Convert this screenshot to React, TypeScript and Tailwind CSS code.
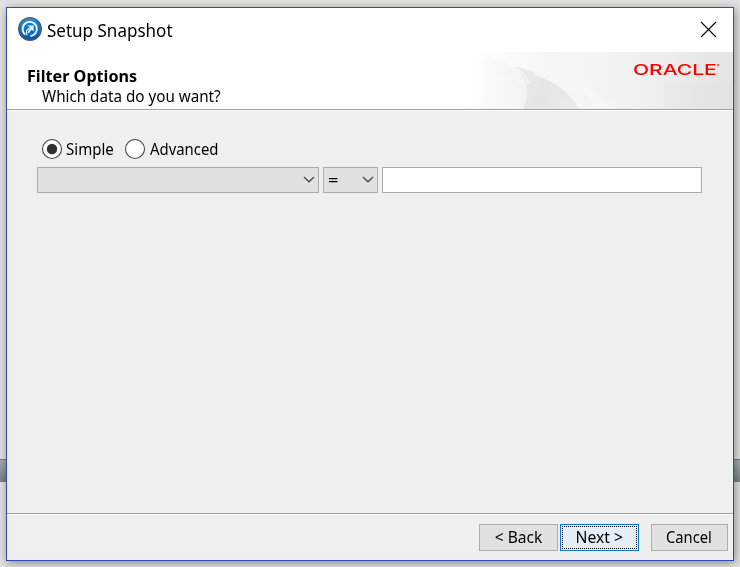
import React from "react";

function AppIcon() {
  return (
    <svg width="24" height="24" viewBox="0 0 24 24" className="mb-[2px] shrink-0">
      <defs>
        <linearGradient id="disc" x1="0" y1="0" x2="0" y2="1">
          <stop offset="0" stopColor="#1a95e6" />
          <stop offset="1" stopColor="#0551ae" />
        </linearGradient>
      </defs>
      <circle cx="12" cy="12" r="11.3" fill="url(#disc)" stroke="#4d5963" strokeWidth="1.3" />
      <path d="M7.2 17.4A7.1 7.1 0 1 1 12.4 19" fill="none" stroke="#e8f4fd" strokeWidth="1.9" />
      <path d="M9 18.2C7.6 15 8.6 12.2 11.6 11.4" fill="none" stroke="#e8f4fd" strokeWidth="1.2" />
      <path d="M9.8 8.6H15.6V14.4L13.6 12.6L10.6 16.6L9.4 15.4L12 11.2Z" fill="#e8f4fd" />
    </svg>
  );
}

function Chevron() {
  return (
    <svg width="12" height="7" viewBox="0 0 12 7" className="mb-px shrink-0">
      <path d="M1 1l5 4.8L11 1" fill="none" stroke="#444" strokeWidth="1.2" />
    </svg>
  );
}

function BannerArt() {
  return (
    <svg width="273" height="57" viewBox="0 0 273 57" className="absolute top-0 right-0">
      <defs>
        <linearGradient id="base" x1="0" y1="0" x2="1" y2="0">
          <stop offset="0" stopColor="#fff" />
          <stop offset="0.3" stopColor="#f7f7f7" />
          <stop offset="0.65" stopColor="#f1f1f1" />
          <stop offset="1" stopColor="#e4e4e4" />
        </linearGradient>
        <linearGradient id="petal" x1="0" y1="0" x2="1" y2="0">
          <stop offset="0" stopColor="#fbfbfb" />
          <stop offset="1" stopColor="#f3f3f3" />
        </linearGradient>
        <linearGradient id="shade" x1="0" y1="0" x2="1" y2="0.4">
          <stop offset="0" stopColor="#ececec" />
          <stop offset="0.6" stopColor="#e5e5e5" />
          <stop offset="1" stopColor="#ebebeb" />
        </linearGradient>
        <linearGradient id="ray" x1="0" y1="0" x2="1" y2="0.5">
          <stop offset="0" stopColor="#fafafa" />
          <stop offset="1" stopColor="#fafafa" stopOpacity="0" />
        </linearGradient>
        <filter id="soft">
          <feGaussianBlur stdDeviation="0.7" />
        </filter>
      </defs>
      <path d="M0 0h273v57H0z" fill="url(#base)" />
      <g filter="url(#soft)">
        <path d="M22 3C42 5 64 18 69 34Q69 47 63 60H20L28 28Q24 16 22 3Z" fill="url(#petal)" />
        <path d="M54 14C87 22 112 39 121 60H62Q75 33 54 14Z" fill="url(#shade)" />
        <path d="M28 27Q48 24 68 32" fill="none" stroke="#fff" strokeOpacity="0.6" strokeWidth="1" />
        <path d="M22 4C42 6 62 14 69 32" fill="none" stroke="#fff" strokeWidth="1" />
        <path d="M74 22C96 29 114 40 122 60" fill="none" stroke="#f8f8f8" strokeWidth="1.4" />
        <path d="M122 34L170 60H139Q128 48 122 34Z" fill="url(#ray)" />
      </g>
      <path d="M204 30h69v27H204z" fill="#bbb" opacity="0.04" />
    </svg>
  );
}

function Radio({ label, checked, className }: { label: string; checked?: boolean; className?: string }) {
  return (
    <label className="flex h-[22px] items-center">
      <svg width="22" height="22" viewBox="0 0 22 22">
        <circle cx="11" cy="11" r="9.5" fill="#fff" stroke="#444" strokeWidth="1.1" />
        {checked && <circle cx="11" cy="11" r="5.2" fill="#303030" />}
      </svg>
      <span className={className}>{label}</span>
    </label>
  );
}

export default function App() {
  return (
    <div className="relative h-[567px] w-[740px] overflow-hidden bg-[#e2e2e2] pt-[7px] pl-[6px] font-['Noto_Sans','Open_Sans',sans-serif] text-[16px] text-black">
      <div className="absolute top-[459px] left-0 h-[23px] w-full border-t border-[#6e7576] bg-linear-to-b from-[#a5adb0] to-[#788285]" />
      <div className="relative flex h-[554px] w-[728px] flex-col border border-[#2f4bb8] bg-[#efefef] shadow-[1px_2px_9px_rgba(0,0,0,0.4)]">
        <div className="flex h-[44px] shrink-0 items-center bg-white pr-[16px] pl-[11px]">
          <AppIcon />
          <span className="ml-[5px] origin-left scale-x-[0.946] text-[18px] leading-[24px] whitespace-nowrap">Setup Snapshot</span>
          <svg width="17" height="17" viewBox="0 0 17 17" className="mb-px ml-auto">
            <path d="M1 1l15 15M16 1L1 16" stroke="#000" strokeWidth="1.1" />
          </svg>
        </div>
        <div className="relative flex h-[57px] shrink-0 flex-col bg-white pt-[14px] pl-[20px]">
          <BannerArt />
          <span className="origin-left scale-x-[1.01] self-start text-[16px] leading-[20px] font-bold whitespace-nowrap">Filter Options</span>
          <span className="ml-[15px] origin-left scale-x-[0.95] self-start leading-[20px] whitespace-nowrap">Which data do you want?</span>
          <div className="absolute top-[9px] left-[626px] flex h-[18px] origin-left scale-x-[1.4] items-center font-['Inter',sans-serif] text-[15px] leading-[18px] font-medium text-[#ff0000]">
            ORACLE<span className="mb-[9px] text-[3px] leading-[4px]">®</span>
          </div>
        </div>
        <div className="h-[2px] shrink-0 border-t border-[#a0a0a0] bg-white" />
        <div className="flex-1 pt-[27px] pl-[30px]">
          <div className="flex gap-[9px] pl-[4px]">
            <Radio label="Simple" checked className="ml-[3px] w-[49px] origin-left scale-x-[0.94] whitespace-nowrap" />
            <Radio label="Advanced" className="ml-[4px] origin-left scale-x-[0.93] whitespace-nowrap" />
          </div>
          <div className="mt-[7px] flex gap-[4px]">
            <div className="flex h-[26px] w-[282px] items-center justify-end border border-[#adadb1] bg-[#e1e1e1] pr-[3px]">
              <Chevron />
            </div>
            <div className="flex h-[26px] w-[55px] items-center justify-between border border-[#adadb1] bg-[#e1e1e1] pr-[3px] pl-[4px]">
              <span className="origin-left scale-x-[1.15]">=</span>
              <Chevron />
            </div>
            <div className="h-[26px] w-[320px] border border-[#a9a9ad] bg-white" />
          </div>
        </div>
        <div className="h-[2px] shrink-0 border-t border-[#a0a0a0] bg-white" />
        <div className="flex h-[45px] shrink-0 pt-[9px] pl-[472px] whitespace-nowrap">
          <div className="flex h-[27px] w-[79px] items-center justify-center border border-[#adadad] bg-[#e1e1e1] pb-px">
            <span className="scale-x-[0.97]">&lt; Back</span>
          </div>
          <div className="ml-[2px] h-[27px] w-[79px] border border-[#0078d7] bg-[#e5eef6] p-px">
            <div className="flex h-full items-center justify-center border border-dotted border-black pb-px">
              <span className="scale-x-[0.98]">Next &gt;</span>
            </div>
          </div>
          <div className="ml-[12px] flex h-[27px] w-[77px] items-center justify-center border border-[#adadad] bg-[#e1e1e1] pr-[2px] pb-px">
            <span className="scale-x-[0.92]">Cancel</span>
          </div>
        </div>
      </div>
    </div>
  );
}
